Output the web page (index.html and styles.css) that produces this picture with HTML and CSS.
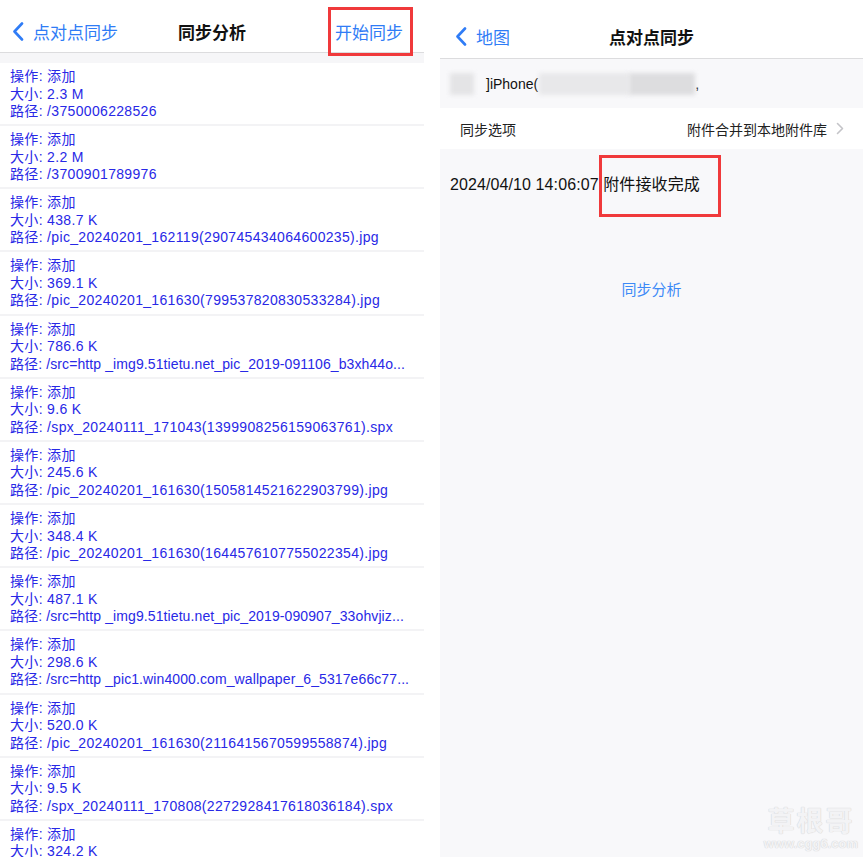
FILE: index.html
```html
<!DOCTYPE html>
<html lang="zh-CN">
<head>
<meta charset="utf-8">
<title>同步分析</title>
<link rel="stylesheet" href="styles.css">
</head>
<body>
<div class="page">
  <section class="panel left">
    <header class="nav nav-left">
      <div class="nav-back">
        <svg class="chev" width="12" height="19" viewBox="0 0 12 19"><path d="M10 1.5 L2.5 9.5 L10 17.5" fill="none" stroke="#2f7cf6" stroke-width="2.6" stroke-linecap="round" stroke-linejoin="round"/></svg>
        <span>点对点同步</span>
      </div>
      <div class="nav-title">同步分析</div>
      <div class="nav-action">开始同步</div>
      <div class="mark mark-start"></div>
    </header>
    <div class="band"></div>
    <ul class="list">
      <li><p>操作: 添加</p><p>大小: 2.3 M</p><p>路径: /3750006228526</p></li>
      <li><p>操作: 添加</p><p>大小: 2.2 M</p><p>路径: /3700901789976</p></li>
      <li><p>操作: 添加</p><p>大小: 438.7 K</p><p>路径: /pic_20240201_162119(290745434064600235).jpg</p></li>
      <li><p>操作: 添加</p><p>大小: 369.1 K</p><p>路径: /pic_20240201_161630(799537820830533284).jpg</p></li>
      <li><p>操作: 添加</p><p>大小: 786.6 K</p><p class="trunc">路径: /src=http _img9.51tietu.net_pic_2019-091106_b3xh44o...</p></li>
      <li><p>操作: 添加</p><p>大小: 9.6 K</p><p>路径: /spx_20240111_171043(1399908256159063761).spx</p></li>
      <li><p>操作: 添加</p><p>大小: 245.6 K</p><p>路径: /pic_20240201_161630(1505814521622903799).jpg</p></li>
      <li><p>操作: 添加</p><p>大小: 348.4 K</p><p>路径: /pic_20240201_161630(1644576107755022354).jpg</p></li>
      <li><p>操作: 添加</p><p>大小: 487.1 K</p><p class="trunc">路径: /src=http _img9.51tietu.net_pic_2019-090907_33ohvjiz...</p></li>
      <li><p>操作: 添加</p><p>大小: 298.6 K</p><p class="trunc">路径: /src=http _pic1.win4000.com_wallpaper_6_5317e66c77...</p></li>
      <li><p>操作: 添加</p><p>大小: 520.0 K</p><p>路径: /pic_20240201_161630(2116415670599558874).jpg</p></li>
      <li><p>操作: 添加</p><p>大小: 9.5 K</p><p>路径: /spx_20240111_170808(2272928417618036184).spx</p></li>
      <li><p>操作: 添加</p><p>大小: 324.2 K</p><p>路径: /pic_20240201_161630(1823456701928374655).jpg</p></li>
    </ul>
  </section>

  <section class="panel right">
    <header class="nav nav-right">
      <div class="nav-back">
        <svg class="chev" width="12" height="19" viewBox="0 0 12 19"><path d="M10 1.5 L2.5 9.5 L10 17.5" fill="none" stroke="#2f7cf6" stroke-width="2.6" stroke-linecap="round" stroke-linejoin="round"/></svg>
        <span>地图</span>
      </div>
      <div class="nav-title">点对点同步</div>
      <div class="nav-spacer"></div>
    </header>
    <div class="device-row">
      <span class="blur blur-a"></span>
      <span class="device-text">]iPhone(</span>
      <span class="blur blur-b"></span>
      <span class="blur blur-c"></span>
      <span class="device-text comma">,</span>
    </div>
    <div class="option-row">
      <span class="opt-label">同步选项</span>
      <span class="opt-value">附件合并到本地附件库
        <svg class="opt-chev" width="8" height="13" viewBox="0 0 8 13"><path d="M1.5 1.5 L6.5 6.5 L1.5 11.5" fill="none" stroke="#c4c4c8" stroke-width="1.6" stroke-linecap="round" stroke-linejoin="round"/></svg>
      </span>
    </div>
    <div class="status">
      <span class="status-text">2024/04/10 14:06:07 附件接收完成</span>
      <div class="mark mark-done"></div>
    </div>
    <div class="analyze">同步分析</div>
    <div class="watermark">
      <span class="wm-big">草根哥</span>
      <span class="wm-small">www.cgg6.com</span>
    </div>
  </section>
</div>
</body>
</html>
```

FILE: styles.css
```css
* { box-sizing: border-box; }
html, body { margin: 0; padding: 0; background: #ffffff; }
body {
  font-family: "Liberation Sans", "Noto Sans CJK SC", sans-serif;
  width: 863px;
  height: 857px;
  overflow: hidden;
}
.page {
  display: flex;
  gap: 16px;
  height: 857px;
}
.panel {
  position: relative;
  height: 857px;
  overflow: hidden;
}
.left { width: 424px; background: #fff; }
.right { width: 423px; background: #f8f8fa; }

.nav {
  display: grid;
  grid-template-columns: 1fr auto 1fr;
  align-items: center;
  background: #fff;
  border-bottom: 1px solid #dcdcde;
  position: relative;
}
.nav-left { height: 53px; padding: 10px 12px 0 12px; }
.nav-right { height: 59px; padding: 14px 15px 0 15px; }
.nav-back {
  display: flex;
  align-items: center;
  gap: 9px;
  color: #2f7cf6;
  font-size: 17px;
}
.nav-title {
  font-size: 17px;
  font-weight: bold;
  color: #111;
}
.nav-action {
  justify-self: end;
  color: #2f7cf6;
  font-size: 17px;
  padding-right: 9px;
}
.mark {
  position: absolute;
  border: 3px solid #f0393b;
}
.mark-start { left: 328px; top: 7px; width: 85px; height: 49px; z-index: 2; }

.band { height: 10px; background: #f6f6f8; }
.list { list-style: none; margin: 0; padding: 0; }
.list li {
  padding: 5px 6px 3.67px 10px;
  border-bottom: 2px solid #f3f3f5;
}
.list p {
  margin: 0;
  font-size: 14px;
  line-height: 17.5px;
  letter-spacing: 0.33px;
  color: #2828e6;
  white-space: nowrap;
}
.list p.trunc { letter-spacing: 0.1px; }

.device-row {
  height: 49px;
  display: flex;
  align-items: center;
  padding-left: 10px;
  font-size: 14px;
  color: #111;
}
.blur {
  display: inline-block;
  height: 22px;
  background: #e2e2e4;
  filter: blur(2px);
}
.blur-a { width: 24px; margin-right: 12px; background: #e4e4e6; }
.blur-b { width: 90px; background: #e8e8ea; }
.blur-c { width: 66px; background: #dddddf; }
.device-text { margin-right: 1px; }

.option-row {
  height: 41px;
  background: #fff;
  display: flex;
  align-items: center;
  justify-content: space-between;
  padding: 0 19px 0 20px;
  font-size: 14px;
  color: #222;
}
.opt-value { display: flex; align-items: center; gap: 9px; }

.status {
  position: relative;
  padding: 24px 0 0 10px;
  height: 110px;
}
.status-text { font-size: 16px; color: #111; line-height: 24px; letter-spacing: 0.1px; }
.mark-done { left: 159px; top: 6px; width: 122px; height: 62px; }

.analyze {
  text-align: center;
  color: #3d8af7;
  font-size: 15px;
  line-height: 20px;
  margin-top: 21px;
}

.watermark {
  position: absolute;
  right: 5px;
  bottom: 6px;
  display: flex;
  flex-direction: column;
  align-items: center;
  color: #f3f3f5;
  text-shadow: 0 0 1px #d4d4d6, 0 0 1px #d4d4d6;
}
.wm-big { font-size: 27px; font-weight: bold; letter-spacing: 2px; line-height: 30px; }
.wm-small { font-size: 13px; font-weight: bold; line-height: 14px; }
```
